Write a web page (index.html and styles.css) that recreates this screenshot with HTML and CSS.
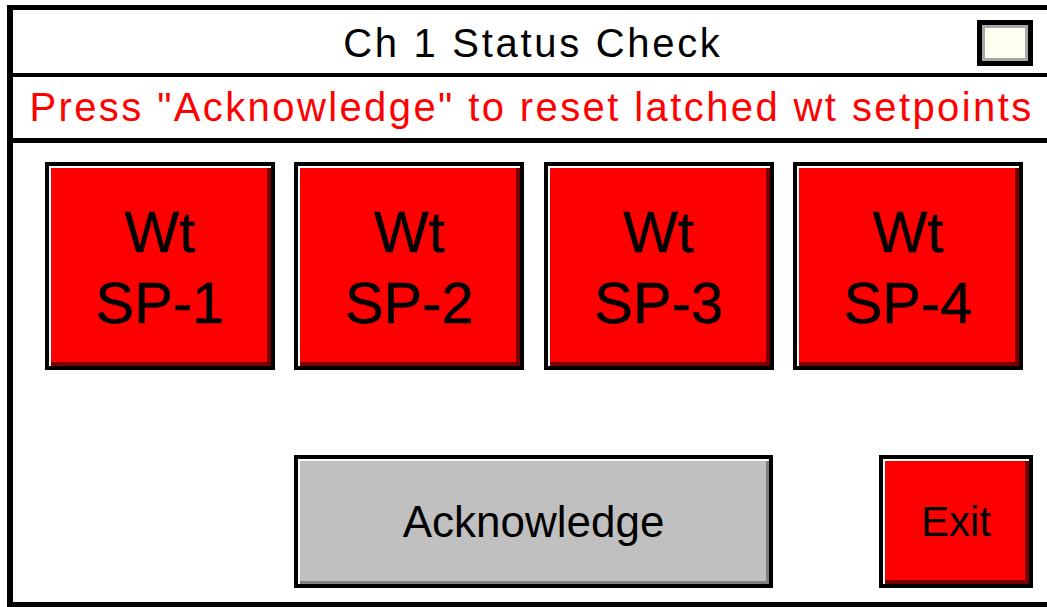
FILE: index.html
```html
<!DOCTYPE html>
<html lang="en">
<head>
    <meta charset="UTF-8">
    <title>Ch 1 Status Check</title>
    <link rel="stylesheet" href="styles.css">
</head>
<body>
<div class="frame">
    <header class="title-bar">
        <span></span>
        <span class="title">Ch 1 Status Check</span>
        <span class="indicator"></span>
    </header>
    <div class="message">Press "Acknowledge" to reset latched wt setpoints</div>
    <div class="panel">
        <div class="setpoints">
            <button class="btn btn-red sp">Wt<br>SP-1</button>
            <button class="btn btn-red sp">Wt<br>SP-2</button>
            <button class="btn btn-red sp">Wt<br>SP-3</button>
            <button class="btn btn-red sp">Wt<br>SP-4</button>
        </div>
        <div class="actions">
            <button class="btn btn-grey ack">Acknowledge</button>
            <button class="btn btn-red exit">Exit</button>
        </div>
    </div>
</div>
</body>
</html>
```

FILE: styles.css
```css
/* Reset */
*, *::before, *::after {
    box-sizing: border-box;
    margin: 0;
    padding: 0;
}
html, body {
    overflow: hidden;
    background: #fff;
}
body {
    font-family: "Liberation Sans", Arial, sans-serif;
    color: #000;
    padding: 5px 0 0 7px;
}
/* the panel frame runs past the right edge of the window */
.frame {
    width: 1043px;
    height: 602px;
    border: 6px solid #000;
    border-top-width: 5px;
    border-bottom-width: 5px;
    border-right: 0;
    display: flex;
    flex-direction: column;
    flex-shrink: 0;
}
.title-bar {
    height: 67px;
    border-bottom: 4px solid #000;
    display: grid;
    grid-template-columns: 1fr auto 1fr;
    align-items: center;
    padding: 3px 17px 0 17px;
}
.title {
    font-size: 40px;
    letter-spacing: 2.7px;
    white-space: nowrap;
    padding-left: 2.7px;
}
.indicator {
    justify-self: end;
    width: 56px;
    height: 46px;
    border: 5px solid #000;
    background: #fffff0;
    box-shadow: inset 0 0 0 3px #a8a8a8;
}
.message {
    height: 66px;
    border-bottom: 5px solid #000;
    color: #f00;
    font-size: 40px;
    letter-spacing: 2.4px;
    white-space: nowrap;
    text-align: center;
    display: flex;
    align-items: center;
    justify-content: center;
}
.panel {
    flex: 1;
    padding: 19px 0 0 32px;
}
.btn {
    font-family: "Liberation Sans", Arial, sans-serif;
    color: #000;
    border: 4px solid #000;
    cursor: pointer;
    display: flex;
    align-items: center;
    justify-content: center;
    text-align: center;
}
.btn-red {
    background: #f00;
    box-shadow: inset 2px 2px 0 #fff, inset -4px -4px 0 #7a0000;
}
.btn-grey {
    background: #c0c0c0;
    box-shadow: inset 2px 2px 0 #fff, inset -3px -3px 0 #808080;
}
.setpoints {
    display: grid;
    grid-template-columns: repeat(4, 230px);
    column-gap: 19.4px;
}
.sp {
    height: 208px;
    font-size: 58px;
    line-height: 71px;
    padding-top: 2px;
    -webkit-text-stroke: 0.4px #000;
}
.actions {
    display: flex;
    margin-top: 85px;
    padding-left: 249px;
}
.ack {
    width: 479px;
    height: 133px;
    font-size: 44px;
}
.exit {
    width: 154px;
    height: 133px;
    margin-left: 106px;
    font-size: 42px;
}
```
